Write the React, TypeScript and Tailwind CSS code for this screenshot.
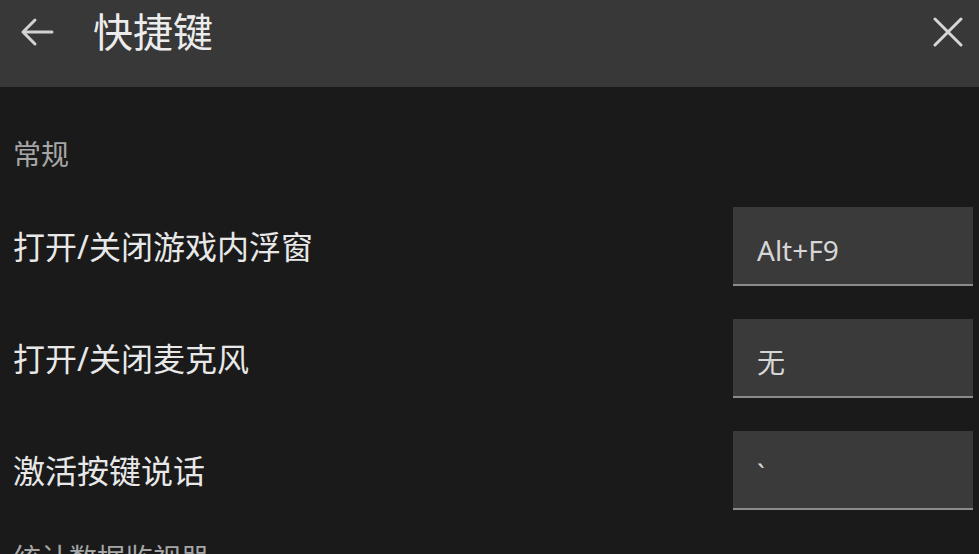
const font = { fontFamily: '"Noto Sans", "Noto Sans CJK SC", sans-serif' };

type Shortcut = { label: string; value: string };

const general: Shortcut[] = [
  { label: "打开/关闭游戏内浮窗", value: "Alt+F9" },
  { label: "打开/关闭麦克风", value: "无" },
  { label: "激活按键说话", value: "`" },
];

function ShortcutRow({ item }: { item: Shortcut }) {
  return (
    <div className="flex items-center justify-between h-[79px]">
      <div className="text-[32px] leading-none text-[#e8e8e8]">{item.label}</div>
      <div className="w-[240px] h-[79px] bg-[#3a3a3a] border-b-2 border-[#8b8b8b] flex items-center pl-[24px] pt-[8px] text-[28px] text-[#d6d6d6]">
        {item.value}
      </div>
    </div>
  );
}

export default function App() {
  return (
    <div className="w-[979px] h-[554px] overflow-hidden bg-[#1a1a1a] flex flex-col" style={font}>
      <div className="h-[87px] shrink-0 bg-[#383838] pl-[20px] pr-[16px]">
        <div className="h-[63px] flex items-center">
          <svg width="34" height="30" viewBox="0 0 34 30" fill="none" stroke="#d2d2d2" strokeWidth="3" strokeLinecap="round" strokeLinejoin="round">
            <path d="M32 15H3M15 3L3 15l12 12" />
          </svg>
          <div className="ml-[39px] text-[40px] leading-none text-[#ececec]">快捷键</div>
          <svg className="ml-auto" width="30" height="30" viewBox="0 0 30 30" fill="none" stroke="#d6d6d6" strokeWidth="3" strokeLinecap="round">
            <path d="M2 2l26 26M28 2L2 28" />
          </svg>
        </div>
      </div>
      <div className="pl-[13px] pr-[6px] pt-[51px]">
        <div className="text-[28px] leading-[32px] text-[#a6a6a6]">常规</div>
        <div className="mt-[37px] flex flex-col gap-[33px]">
          {general.map((item) => (
            <ShortcutRow key={item.label} item={item} />
          ))}
        </div>
        <div className="mt-[32px] text-[28px] leading-[32px] text-[#a6a6a6]">统计数据监视器</div>
      </div>
    </div>
  );
}
